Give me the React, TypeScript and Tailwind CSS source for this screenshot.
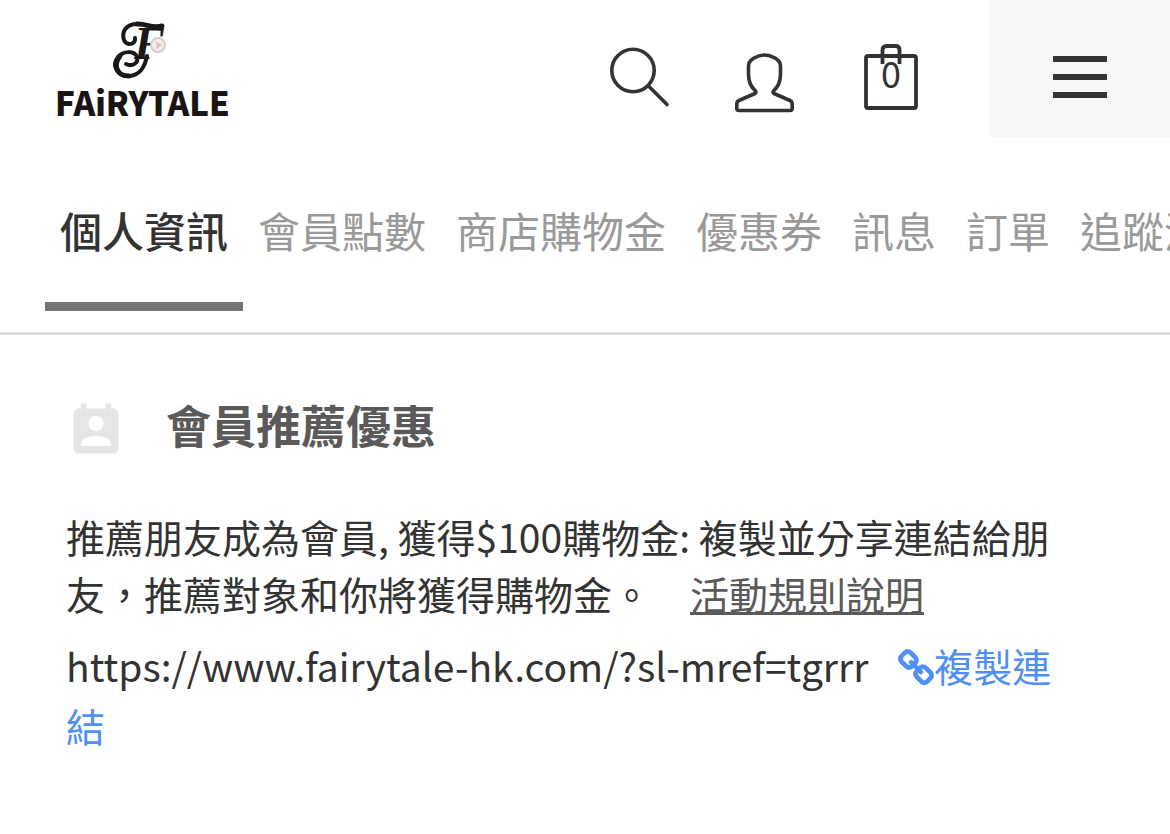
import { MdPermContactCalendar } from "react-icons/md";
import clsx from "clsx";

const tabs = [
  "個人資訊",
  "會員點數",
  "商店購物金",
  "優惠券",
  "訊息",
  "訂單",
  "追蹤清單",
];

function Logo() {
  return (
    <svg
      width="180"
      height="116"
      viewBox="0 -10 180 116"
      role="img"
      aria-label="Fairytale"
    >
      {/* flourishes around the initial */}
      <g fill="none" stroke="#1a1818" strokeLinecap="round">
        <path
          d="M82 17C83 24 73 25 71 19C68 10 74 3 84 3"
          strokeWidth="4"
        />
        <path
          d="M84 3C93 2 98 8 109 5"
          strokeWidth="5"
        />
        <path
          d="M73 43C79 46 86 42 84 36C81 29 70 30 65 36C58 45 65 56 76 55C88 54 92 45 94 35"
          strokeWidth="4"
        />
        <path d="M67 35C59 45 65 55 76 55" strokeWidth="5" />
      </g>
      <text
        x="81"
        y="38"
        fontFamily="'Liberation Serif', serif"
        fontStyle="italic"
        fontWeight="700"
        fontSize="46"
        fill="#1a1818"
      >
        F
      </text>
      <circle cx="105" cy="24" r="7" fill="#f5ecea" stroke="#dccdcb" strokeWidth="2" />
      <path d="M102 20l7 4-6 4 1-4z" fill="#dcbcb6" />
      <text
        x="2"
        y="95"
        fontFamily="'Noto Sans CJK TC', sans-serif"
        fontWeight="900"
        fontSize="33"
        fill="#1a1414"
      >
        FAiRYTALE
      </text>
    </svg>
  );
}

function SearchIcon() {
  return (
    <svg width="60" height="60" viewBox="0 0 60 60" fill="none" stroke="#333" strokeWidth="3.6" strokeLinecap="round">
      <circle cx="24" cy="23.5" r="21.2" />
      <path d="M39.5 39L58 57.5" />
    </svg>
  );
}

function UserIcon() {
  return (
    <svg width="60" height="60" viewBox="0 0 60 60" fill="none" stroke="#333" strokeWidth="3.6" strokeLinejoin="round">
      <path d="M29.5 2C36 2 45.500 6.500 45.500 13V21C45.500 30 42.500 34 38.500 38Q37.500 39.500 39 40.500L55 47.500Q57.200 48.500 57.200 51V55.500Q57.200 57.500 55 57.500H4Q1.800 57.500 1.800 55.500V51Q1.800 48.500 4 47.500L20 40.500Q21.500 39.500 20.500 38C16.500 34 13.500 30 13.500 21V13C13.500 6.500 23 2 29.500 2Z" />
    </svg>
  );
}

function BagIcon() {
  return (
    <svg width="54" height="66" viewBox="0 0 54 66" fill="none" stroke="#333" strokeWidth="3.8">
      <rect x="2" y="12" width="50" height="52" rx="2" />
      <path d="M18.500 20V6Q18.500 2 22.500 2H31.500Q35.500 2 35.500 6V20" />
    </svg>
  );
}

function ChainIcon() {
  return (
    <svg
      width="36"
      height="39"
      viewBox="0 0 1664 1792"
      fill="currentColor"
      stroke="currentColor"
      strokeWidth="36"
      className="inline-block align-[-6px]"
      aria-hidden="true"
    >
      <path d="M1456 1216q0-40-28-68l-208-208q-28-28-68-28-42 0-72 32 3 3 19 18.500t21.500 21.500 15 19 13 25.500 3.500 27.500q0 40-28 68t-68 28q-15 0-27.500-3.500t-25.500-13-19-15-21.500-21.500-18.500-19q-33 31-33 73 0 40 28 68l206 207q27 27 68 27 40 0 68-26l147-146q28-28 28-67zm-703-705q0-40-28-68l-206-207q-28-28-68-28-39 0-68 27l-147 146q-28 28-28 67 0 40 28 68l208 208q27 27 68 27 42 0 72-31-3-3-19-18.500t-21.500-21.500-15-19-13-25.500-3.500-27.500q0-40 28-68t68-28q15 0 27.500 3.500t25.500 13 19 15 21.500 21.500 18.500 19q33-31 33-73zm895 705q0 120-85 203l-147 146q-83 83-203 83-121 0-204-85l-206-207q-83-83-83-203 0-123 88-209l-88-88q-86 88-208 88-120 0-204-84l-208-208q-84-84-84-204t85-203l147-146q83-83 203-83 121 0 204 85l206 207q83 83 83 203 0 123-88 209l88 88q86-88 208-88 120 0 204 84l208 208q84 84 84 204z" />
    </svg>
  );
}

export default function App() {
  return (
    <div className="min-h-screen bg-white font-['Noto_Sans_CJK_TC',sans-serif] text-[#333]">
      <header className="flex h-[137px] items-start">
        <a href="#home" className="ml-[53px] mt-[11px]">
          <Logo />
        </a>
        <div className="ml-auto mr-[72px] flex items-start">
          <button type="button" aria-label="搜尋" className="mr-[66px] mt-[47px]">
            <SearchIcon />
          </button>
          <button type="button" aria-label="帳戶" className="mr-[69px] mt-[53px]">
            <UserIcon />
          </button>
          <button type="button" aria-label="購物車" className="relative mt-[44px]">
            <BagIcon />
            <span className="absolute inset-x-0 top-2 text-center text-[36px] leading-10">
              0
            </span>
          </button>
        </div>
        <button
          type="button"
          aria-label="選單"
          className="flex h-full w-[180px] flex-col items-center gap-3 bg-[#f7f7f7] pt-14"
        >
          <span className="h-[6px] w-[54px] bg-[#333]" />
          <span className="h-[6px] w-[54px] bg-[#333]" />
          <span className="h-[6px] w-[54px] bg-[#333]" />
        </button>
      </header>

      <nav className="flex h-[198px] items-start overflow-hidden whitespace-nowrap border-b-3 border-[#dcdcdc] pl-[45px] pt-[65px]">
        {tabs.map((tab, i) => (
          <a
            key={tab}
            href="#tab"
            className={clsx(
              "h-[109px] shrink-0 px-[15px] text-[42px] leading-[56px]",
              i === 0
                ? "border-b-9 border-[#757575] font-medium text-[#333]"
                : "text-[#999]"
            )}
          >
            {tab}
          </a>
        ))}
      </nav>

      <main className="pl-[66px] pr-[90px] pt-[66px]">
        <div className="flex items-start gap-10">
          <MdPermContactCalendar size={60} color="#e5e5e5" />
          <h1 className="text-[45px] font-bold leading-[48px] text-[#5a5a5a]">
            會員推薦優惠
          </h1>
        </div>
        <p className="mt-[47px] text-[39px] leading-[57px]">
          推薦朋友成為會員, 獲得$100購物金: 複製並分享連結給朋友，推薦對象和你將獲得購物金。
          <a href="#rules" className="ml-[39px] text-[#5a5a5a] underline">
            活動規則說明
          </a>
        </p>
        <p className="mt-[13px] text-[39px] leading-[60px]">
          https://www.fairytale-hk.com/?sl-mref=tgrrr
          <a href="#copy" className="ml-[30px] text-[#4f90f7]">
            <ChainIcon />
            複製連結
          </a>
        </p>
      </main>
    </div>
  );
}
